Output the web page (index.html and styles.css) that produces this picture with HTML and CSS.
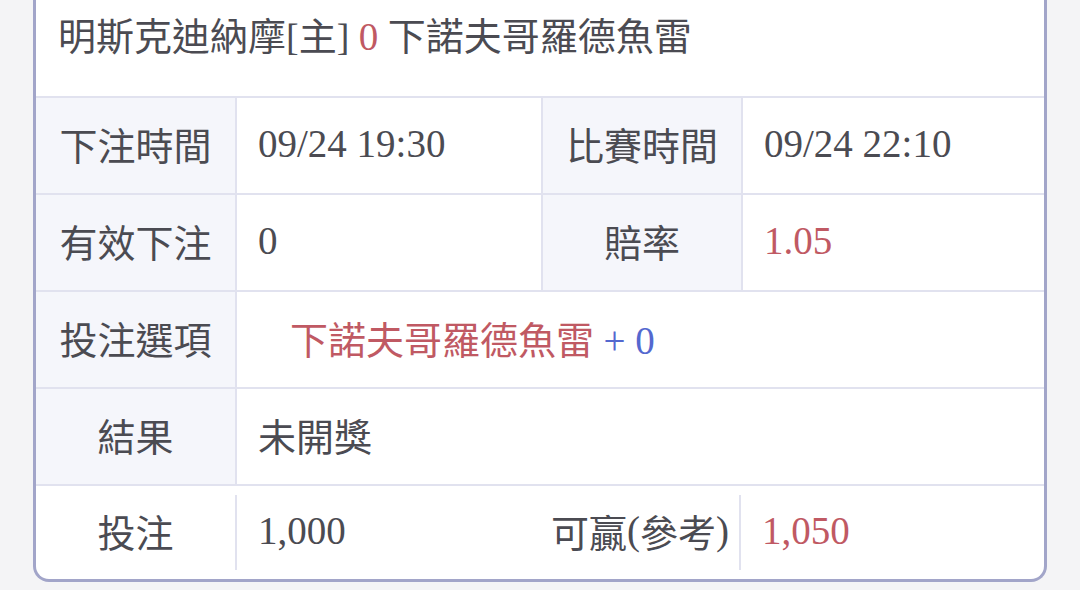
FILE: index.html
```html
<!DOCTYPE html>
<html lang="zh-Hant">
<head>
<meta charset="utf-8">
<link rel="stylesheet" href="styles.css">
</head>
<body>
<div class="card">
  <div class="head"><span>明斯克迪納摩[主] <span class="red num">0</span> 下諾夫哥羅德魚雷</span></div>
  <div class="grid">
    <div class="label">下注時間</div>
    <div class="value num">09/24 19:30</div>
    <div class="label">比賽時間</div>
    <div class="value num">09/24 22:10</div>

    <div class="label">有效下注</div>
    <div class="value num">0</div>
    <div class="label">賠率</div>
    <div class="value num red">1.05</div>

    <div class="label">投注選項</div>
    <div class="value wide pick"><span><span class="red">下諾夫哥羅德魚雷</span> <span class="blue num">+ 0</span></span></div>

    <div class="label">結果</div>
    <div class="value wide">未開獎</div>
  </div>
  <div class="last">
    <div class="lcell">投注</div>
    <div class="sep"></div>
    <div class="vcell num">1,000</div>
    <div class="lcell">可贏<span class="paren">(</span>參考<span class="paren">)</span></div>
    <div class="sep"></div>
    <div class="vcell num red">1,050</div>
  </div>
</div>
</body>
</html>
```
FILE: styles.css
```css
html, body {
  margin: 0;
  padding: 0;
  background: #f4f4f6;
}
body {
  font-family: "Liberation Serif", "Noto Sans CJK TC", serif;
  font-size: 38px;
  color: #4b4b52;
  width: 1080px;
  height: 590px;
  overflow: hidden;
}
.num, .paren {
  font-size: 39px;
}
.card {
  margin-left: 33px;
  width: 1014px;
  box-sizing: border-box;
  border: 3px solid #a2a5c9;
  border-top: none;
  border-radius: 0 0 16px 16px;
  background: #ffffff;
  overflow: hidden;
}
.head {
  height: 98px;
  box-sizing: border-box;
  padding: 0 0 30px 22px;
  display: flex;
  align-items: center;
  white-space: pre;
  border-bottom: 2px solid #e1e2ef;
}
.grid {
  display: grid;
  grid-template-columns: 199px 304px 198px 1fr;
  grid-template-rows: 95px 95px 95px 95px;
  gap: 2px;
  background: #e1e2ef;
  border-bottom: 2px solid #e1e2ef;
}
.label {
  background: #f5f6fb;
  display: flex;
  align-items: center;
  justify-content: center;
  padding-bottom: 4px;
}
.value {
  background: #ffffff;
  display: flex;
  align-items: center;
  padding-left: 21px;
  padding-bottom: 4px;
  white-space: pre;
}
.wide {
  grid-column: 2 / 5;
}
.pick {
  padding-left: 53px;
}
.red { color: #c05963; }
.blue { color: #5468cf; }
.last {
  display: flex;
  align-items: center;
  height: 93px;
}
.lcell {
  display: flex;
  align-items: center;
  justify-content: center;
  height: 100%;
  box-sizing: border-box;
  padding-bottom: 4px;
  white-space: pre;
}
.last .lcell:first-child { width: 199px; }
.last .lcell:nth-child(4) { width: 198px; }
.sep {
  width: 2px;
  height: 75px;
  background: #e1e2ef;
  align-self: center;
}
.vcell {
  width: 304px;
  box-sizing: border-box;
  padding-left: 21px;
  padding-bottom: 4px;
  white-space: pre;
}
.vcell:last-child { flex: 1; }
```
